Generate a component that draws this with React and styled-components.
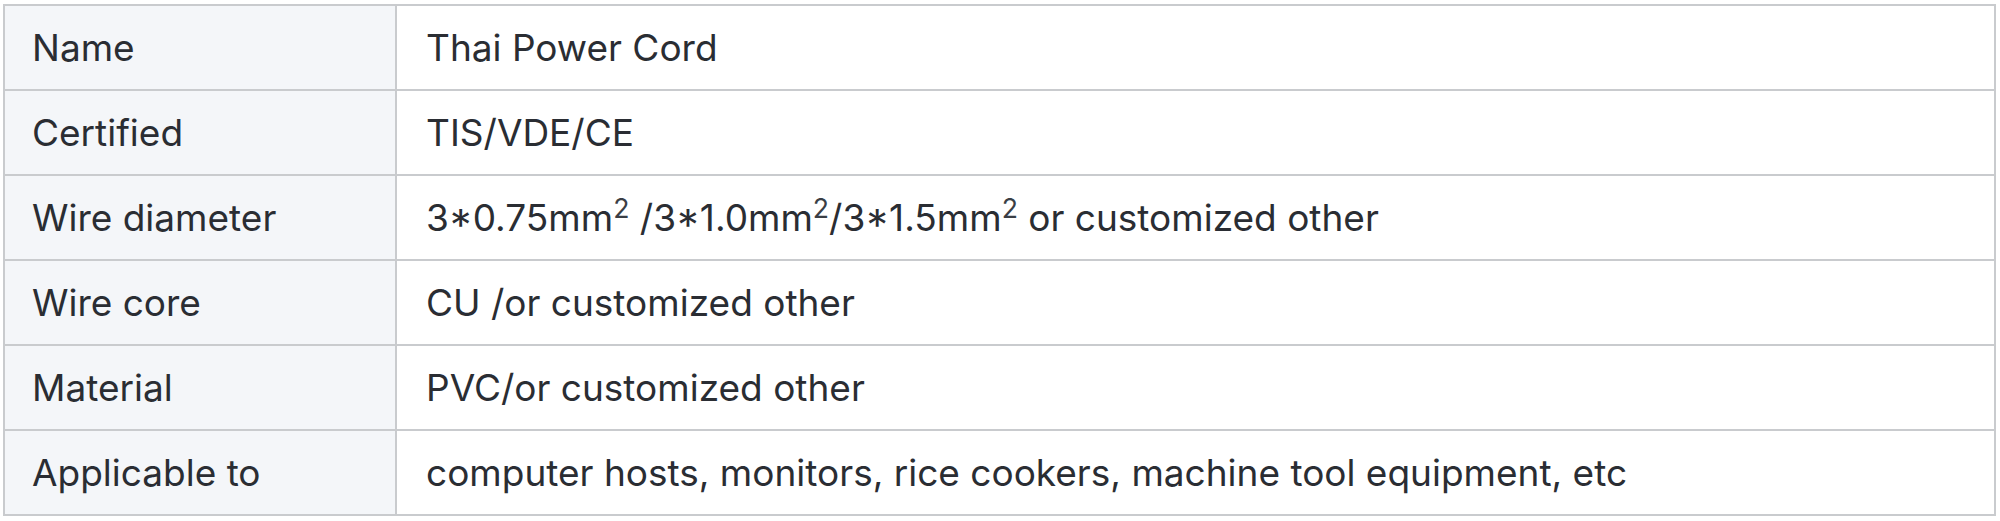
import React from "react";
import styled, { createGlobalStyle } from "styled-components";

const GlobalStyle = createGlobalStyle`
  html, body {
    margin: 0;
    padding: 0;
    background: #ffffff;
  }
  body {
    font-family: Inter, "Noto Sans", sans-serif;
  }
`;

const rows = [
  { label: "Name", value: "Thai Power Cord" },
  { label: "Certified", value: "TIS/VDE/CE" },
  {
    label: "Wire diameter",
    value: (
      <>
        3*0.75mm<sup>2</sup> /3*1.0mm<sup>2</sup>/3*1.5mm<sup>2</sup> or
        customized other
      </>
    ),
  },
  { label: "Wire core", value: "CU /or customized other" },
  { label: "Material", value: "PVC/or customized other" },
  {
    label: "Applicable to",
    value: "computer hosts, monitors, rice cookers, machine tool equipment, etc",
  },
];

const SpecTable = () => {
  return (
    <Wrapper>
      <Table>
        <tbody>
          {rows.map((row) => (
            <Row key={row.label}>
              <Label>{row.label}</Label>
              <Value>{row.value}</Value>
            </Row>
          ))}
        </tbody>
      </Table>
    </Wrapper>
  );
};

export default function App() {
  return (
    <>
      <GlobalStyle />
      <SpecTable />
    </>
  );
}

const Wrapper = styled.div`
  padding: 4px 4px 0 3px;
`;

const Table = styled.table`
  width: 1993px;
  border-collapse: collapse;
  border: 2px solid #c9cbce;
  color: #2a2d33;
  font-size: 37px;
`;

const Row = styled.tr`
  height: 85px;
  border-bottom: 2px solid #c9cbce;
`;

const Label = styled.td`
  width: 333px;
  padding: 0 30px 0 27px;
  background: #f4f6f9;
  border-right: 2px solid #c9cbce;
  white-space: nowrap;
`;

const Value = styled.td`
  padding: 0 30px 0 29px;
  background: #ffffff;

  sup {
    font-size: 0.72em;
    vertical-align: 0.5em;
    line-height: 0;
    color: #3a3e45;
  }
`;
